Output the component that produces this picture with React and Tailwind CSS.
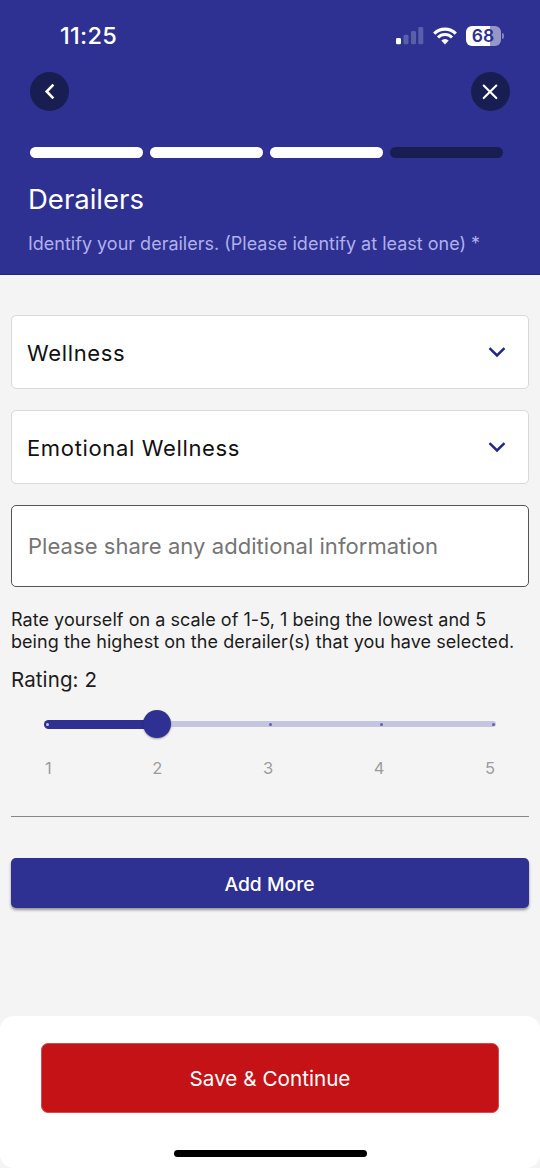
import React, { useState } from 'react'

const STEPS = [true, true, true, false]
const MARKS = [1, 2, 3, 4, 5]

const StatusBar = () => (
  <div className="flex h-[72px] items-center justify-between pl-[60px] pr-[36px]">
    <span className="text-[23.5px] leading-none font-medium tracking-[0.3px] text-white">11:25</span>
    <div className="flex items-center">
      <svg className="h-[18px] w-[28px]" viewBox="0 0 28 18" fill="#fff">
        <rect x="0" y="11" width="5" height="6.3" rx="1.4" />
        <rect x="7.5" y="7.8" width="5" height="9.5" rx="1.4" opacity="0.22" />
        <rect x="15" y="4" width="5" height="13.3" rx="1.4" opacity="0.22" />
        <rect x="22.3" y="0" width="5" height="17.3" rx="1.4" opacity="0.22" />
      </svg>
      <svg className="ml-[9px] h-[18px] w-[24px]" viewBox="0 0 24 18" fill="none" stroke="#fff" strokeWidth="3.1">
        <path d="M1.2 6.6a15.2 15.2 0 0 1 21.6 0" />
        <path d="M5 10.5a9.8 9.8 0 0 1 14 0" />
        <path d="M12 17.4l-3.700-3.800a5.3 5.3 0 0 1 7.400 0z" fill="#fff" stroke="none" />
      </svg>
      <div className="ml-[9.5px] flex h-[19.5px] w-[35px] items-center justify-center rounded-[6px] bg-linear-to-r from-white from-68% to-[#9697c8] to-68%">
        <span className="pr-[1px] text-[17.5px] leading-none font-semibold text-[#2e3191]">68</span>
      </div>
      <div className="ml-[1px] h-[6px] w-[2px] rounded-r-full bg-[#8283be]" />
    </div>
  </div>
)

const RoundButton = ({ label, children }) => (
  <button aria-label={label} className="flex h-[39px] w-[39px] items-center justify-center rounded-full bg-[#191e52]">
    {children}
  </button>
)

const Header = () => (
  <header className="h-[275px] border-b border-[#20228a] bg-[#2e3191]">
    <StatusBar />
    <div className="flex items-center justify-between pr-[30.5px] pl-[30.4px]">
      <RoundButton label="Back">
        <svg className="h-[18px] w-[18px]" viewBox="0 0 18 18" fill="none" stroke="#fff" strokeWidth="2.6">
          <path d="M12.400 1.600L5.700 8.500l6.700 6.900" />
        </svg>
      </RoundButton>
      <RoundButton label="Close">
        <svg className="h-[18px] w-[18px]" viewBox="0 0 18 18" fill="none" stroke="#fff" strokeWidth="2.1" strokeLinecap="round">
          <path d="M2.700 2.500l12.600 12.600M15.300 2.500L2.700 15.100" />
        </svg>
      </RoundButton>
    </div>
    <div className="mt-[35.5px] flex gap-[7px] pl-[30px]">
      {STEPS.map((done, i) => (
        <div key={i} className={`h-[11.5px] w-[113px] rounded-full ${done ? 'bg-white' : 'bg-[#191e52]'}`} />
      ))}
    </div>
    <div className="pl-[28px] whitespace-nowrap">
      <h1 className="mt-[25px] text-[27.5px] leading-[32px] font-normal text-white">Derailers</h1>
      <p className="mt-[16.5px] text-[18px] leading-[24px] font-normal text-[#b0b0ec]">
        Identify your derailers. (Please identify at least one) *
      </p>
    </div>
  </header>
)

const SelectBox = ({ value }) => (
  <button className="flex h-[74px] w-full items-center justify-between rounded-[5px] border border-[#d9d9d9] bg-white pr-[22px] pl-[15px]">
    <span className="pt-[3px] text-[22px] font-normal tracking-[0.65px] text-[#111]">{value}</span>
    <svg className="h-[18px] w-[18px]" viewBox="0 0 18 18" fill="none" stroke="#23268d" strokeWidth="2.5">
      <path d="M1.500 5.200L9 12.500l7.500-7.300" />
    </svg>
  </button>
)

const RatingSlider = ({ value, onChange }) => {
  const percent = ((value - 1) / 4) * 100

  return (
    <div className="pr-[33px] pl-[33px]">
      <div className="relative flex h-[28px] items-center">
        <div className="h-[6px] w-full rounded-full bg-[#c4c5de]" />
        <div className="absolute left-0 h-[9px] rounded-full bg-[#2e3191]" style={{ width: `${percent}%` }} />
        <div className="absolute inset-x-[1.5px] flex justify-between">
          {MARKS.map((mark) => (
            <span key={mark} className={`h-[3px] w-[3px] rounded-full ${mark < value ? 'bg-[#c4c5de]' : 'bg-[#6163ab]'}`} />
          ))}
        </div>
        <div
          className="absolute h-[28px] w-[28px] -translate-x-1/2 rounded-full bg-[#2e3191] shadow-[0_1px_2px_rgba(0,0,0,0.35)]"
          style={{ left: `${percent}%` }}
        />
      </div>
      <div className="mt-[20px] flex justify-between pr-[1px] pl-[1px] text-[16.5px] leading-[20px] font-normal text-[#9c9c9c]">
        {MARKS.map((mark) => (
          <button key={mark} onClick={() => onChange(mark)}>{mark}</button>
        ))}
      </div>
    </div>
  )
}

const App = () => {
  const [rating, setRating] = useState(2)

  return (
    <div className="flex h-[1168px] w-[540px] flex-col overflow-hidden bg-[#f4f4f4] font-['Inter',sans-serif]">
      <Header />
      <main className="flex flex-1 flex-col px-[11px] pt-[39.5px]">
        <div className="flex flex-col gap-[21.5px]">
          <SelectBox value="Wellness" />
          <SelectBox value="Emotional Wellness" />
          <div className="-mt-[0.5px] flex h-[81.5px] items-center rounded-[5px] border border-[#555] bg-white pt-[1px] pl-[16px]">
            <span className="text-[22px] font-normal tracking-[0.05px] whitespace-nowrap text-[#757575]">Please share any additional information</span>
          </div>
        </div>
        <p className="mt-[22.5px] text-[18px] leading-[22px] font-normal tracking-[0.05px] whitespace-nowrap text-[#1c1c1c]">
          Rate yourself on a scale of 1-5, 1 being the lowest and 5
          <br />
          being the highest on the derailer(s) that you have selected.
        </p>
        <p className="mt-[15px] mb-[18px] text-[20.5px] leading-[24px] font-normal tracking-[0.1px] text-[#1c1c1c]">Rating: {rating}</p>
        <RatingSlider value={rating} onChange={setRating} />
        <div className="mt-[38px] h-[1px] bg-[#888]" />
        <button className="mt-[41px] h-[50px] w-full rounded-[5px] bg-[#2e3191] pt-[2px] pr-[1px] text-[19.3px] font-medium text-white shadow-[0_2px_3px_rgba(0,0,0,0.4)]">
          Add More
        </button>
      </main>
      <footer className="flex h-[152px] flex-col items-center rounded-[14px] bg-white pt-[27px]">
        <button className="h-[70px] w-[458px] rounded-[7px] border border-[#d64a50] bg-[#c51216] pt-[2px] text-[20.7px] font-normal text-white">
          Save &amp; Continue
        </button>
        <div className="mt-[37px] h-[7px] w-[193px] rounded-full bg-black" />
      </footer>
    </div>
  )
}

export default App
